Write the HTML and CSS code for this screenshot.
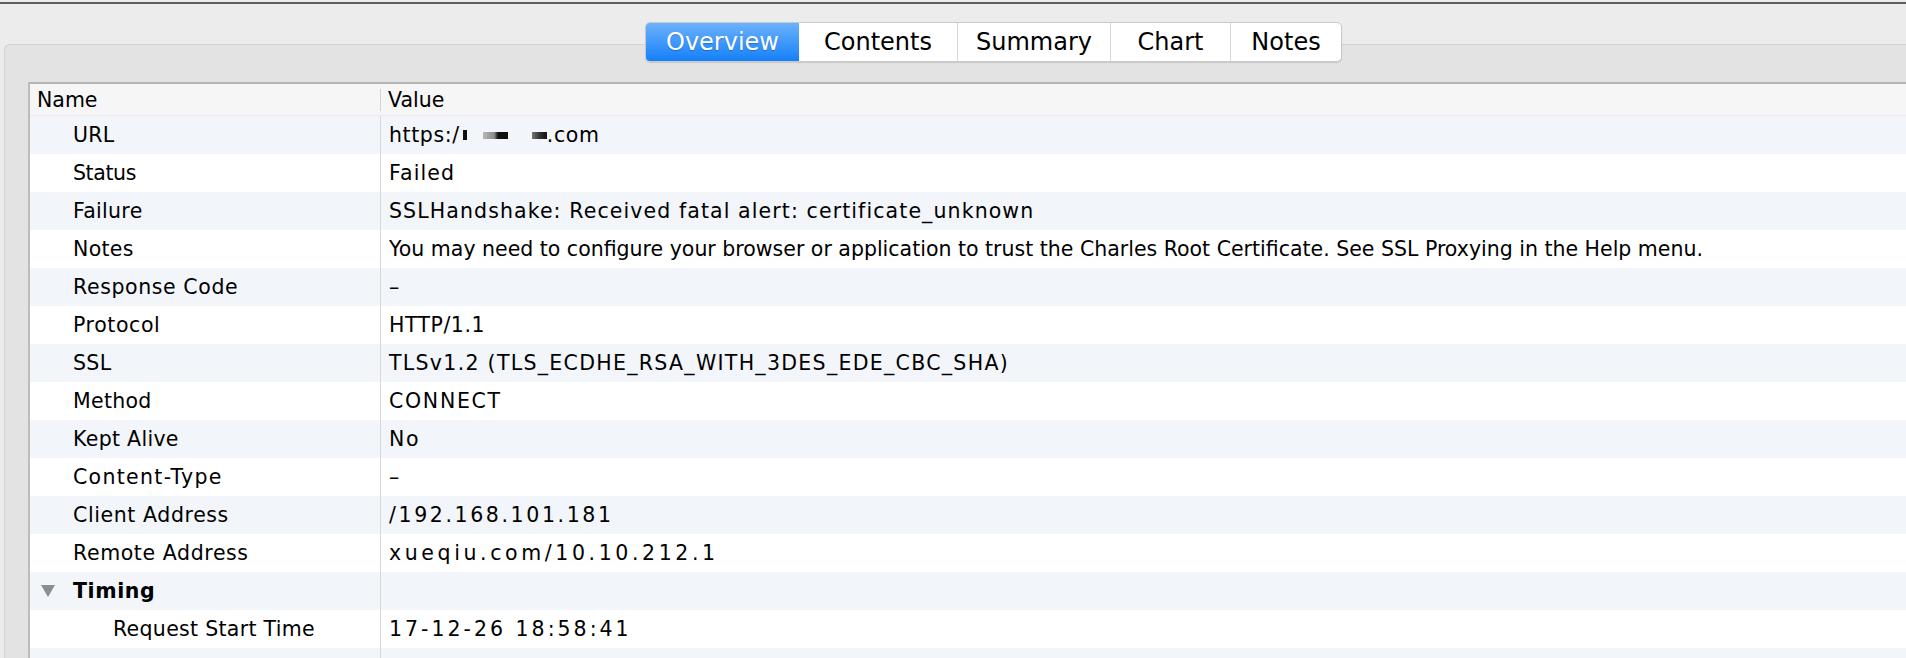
FILE: index.html
```html
<!DOCTYPE html>
<html>
<head>
<meta charset="utf-8">
<link rel="stylesheet" href="styles.css">
</head>
<body>
<div class="window">
  <div class="tabbar">
    <div class="tabs">
      <div class="tab active">Overview</div>
      <div class="tab">Contents</div>
      <div class="tab">Summary</div>
      <div class="tab">Chart</div>
      <div class="tab">Notes</div>
    </div>
  </div>
  <div class="panel">
    <div class="table">
      <div class="head">
        <div class="hcell name">Name</div>
        <div class="hcell value">Value</div>
      </div>
      <div class="row"><div class="cell name">URL</div><div class="cell value url">https:/<span class="blur b1"></span><span class="blur b2"></span><span class="blur b3"></span>.com</div></div>
      <div class="row"><div class="cell name tight">Status</div><div class="cell value ls1">Failed</div></div>
      <div class="row"><div class="cell name">Failure</div><div class="cell value ls1">SSLHandshake: Received fatal alert: certificate_unknown</div></div>
      <div class="row"><div class="cell name">Notes</div><div class="cell value">You may need to configure your browser or application to trust the Charles Root Certificate. See SSL Proxying in the Help menu.</div></div>
      <div class="row"><div class="cell name wide">Response Code</div><div class="cell value">–</div></div>
      <div class="row"><div class="cell name wide">Protocol</div><div class="cell value ls05">HTTP/1.1</div></div>
      <div class="row"><div class="cell name">SSL</div><div class="cell value ls13">TLSv1.2 (TLS_ECDHE_RSA_WITH_3DES_EDE_CBC_SHA)</div></div>
      <div class="row"><div class="cell name">Method</div><div class="cell value ls17">CONNECT</div></div>
      <div class="row"><div class="cell name">Kept Alive</div><div class="cell value ls17">No</div></div>
      <div class="row"><div class="cell name wider">Content-Type</div><div class="cell value">–</div></div>
      <div class="row"><div class="cell name wide">Client Address</div><div class="cell value ls26">/192.168.101.181</div></div>
      <div class="row"><div class="cell name wide">Remote Address</div><div class="cell value ls35">xueqiu.com/10.10.212.1</div></div>
      <div class="row"><div class="cell name group"><span class="tri"></span><b>Timing</b></div><div class="cell value"></div></div>
      <div class="row"><div class="cell name sub">Request Start Time</div><div class="cell value ls3">17-12-26 18:58:41</div></div>
      <div class="row"><div class="cell name sub"></div><div class="cell value"></div></div>
    </div>
  </div>
</div>
</body>
</html>
```

FILE: styles.css
```css
html, body {
  margin: 0;
  padding: 0;
  height: 658px;
  overflow: hidden;
  background: #ececec;
}

body {
  font-family: "DejaVu Sans", sans-serif;
  color: #000;
}

.window {
  margin-top: 2px;
  border-top: 2px solid #5e5e5e;
  background: #ececec;
}

.tabbar {
  position: relative;
  z-index: 2;
  padding-top: 18px;
  padding-left: 645px;
  height: 40px;
}

.tabs {
  display: inline-grid;
  grid-template-columns: 153px 158px 153px 120px 111px;
  height: 40px;
  box-sizing: border-box;
  border: 1px solid #c9c9c9;
  border-radius: 5px;
  background: #fff;
  box-shadow: 0 1px 1px rgba(0, 0, 0, 0.12);
  overflow: hidden;
}

.tab {
  display: flex;
  align-items: center;
  justify-content: center;
  font-size: 24px;
  border-left: 1px solid #d6d6d6;
  color: #000;
}

.tab:first-child {
  border-left: none;
}

.tab.active {
  background: linear-gradient(#6cb2fd, #1580f9);
  color: #fff;
  text-shadow: 0 1px 1px rgba(0, 40, 120, 0.35);
  border-left: none;
}

.tab.active + .tab {
  border-left: none;
}

.panel {
  margin-top: -18px;
  margin-left: 4px;
  box-sizing: border-box;
  height: 614px;
  background: #e3e3e3;
  border-top: 1px solid #d2d2d2;
  border-left: 1px solid #d2d2d2;
  border-radius: 6px 0 0 0;
  padding: 37px 0 0 23px;
  overflow: hidden;
}

.table {
  background: #fff;
  border-top: 2px solid #b5b5b5;
  border-left: 2px solid #bcbcbc;
  height: 100%;
  box-sizing: border-box;
  overflow: hidden;
  font-size: 20.5px;
}

.head {
  display: flex;
  height: 31px;
  background: #f6f6f6;
  border-bottom: 1px solid #ebebeb;
  align-items: center;
}

.hcell {
  box-sizing: border-box;
  white-space: nowrap;
}

.hcell.name {
  width: 350px;
  padding-left: 7px;
}

.hcell.value {
  border-left: 1px solid #d2d2d2;
  padding-left: 7px;
  line-height: 22px;
}

.row {
  display: flex;
  height: 38px;
  align-items: stretch;
}

.row:nth-child(even) {
  background: #f2f5fa;
}

.row:nth-child(odd) {
  background: #ffffff;
}

.cell {
  display: flex;
  align-items: center;
  box-sizing: border-box;
  white-space: nowrap;
}

.cell.name {
  width: 350px;
  padding-left: 43px;
  letter-spacing: 0.3px;
}

.cell.name.tight {
  letter-spacing: -0.4px;
}

.cell.name.wide {
  letter-spacing: 0.6px;
}

.cell.name.wider {
  letter-spacing: 1.3px;
}

.cell.name.sub {
  padding-left: 83px;
}

.cell.name.group {
  padding-left: 11px;
  letter-spacing: 0.6px;
}

.cell.value {
  flex: 1;
  border-left: 1px solid #d8d8d8;
  padding-left: 8px;
}

.ls05 { letter-spacing: 0.5px; }
.ls1 { letter-spacing: 1.1px; }
.ls13 { letter-spacing: 1.3px; }
.ls17 { letter-spacing: 1.7px; }
.ls26 { letter-spacing: 2.6px; }
.ls3 { letter-spacing: 3px; }
.ls35 { letter-spacing: 3.6px; }

.url {
  letter-spacing: 0.6px;
}

.tri {
  width: 0;
  height: 0;
  border-left: 7px solid transparent;
  border-right: 7px solid transparent;
  border-top: 12px solid #8d8d8d;
  margin-right: 18px;
}

.group b {
  font-weight: bold;
}

.blur {
  display: inline-block;
  filter: blur(0.6px);
}

.b1 {
  width: 4px;
  height: 10px;
  margin-left: 3px;
  background: #111;
  vertical-align: -2px;
}

.b2 {
  width: 25px;
  height: 7px;
  margin-left: 16px;
  background: linear-gradient(to right, #b8b8b8, #8a8a8a 45%, #111 60%, #111);
  vertical-align: 4px;
}

.b3 {
  width: 15px;
  height: 7px;
  margin-left: 24px;
  background: linear-gradient(to right, #777, #333 50%, #111);
  vertical-align: 4px;
}
```
